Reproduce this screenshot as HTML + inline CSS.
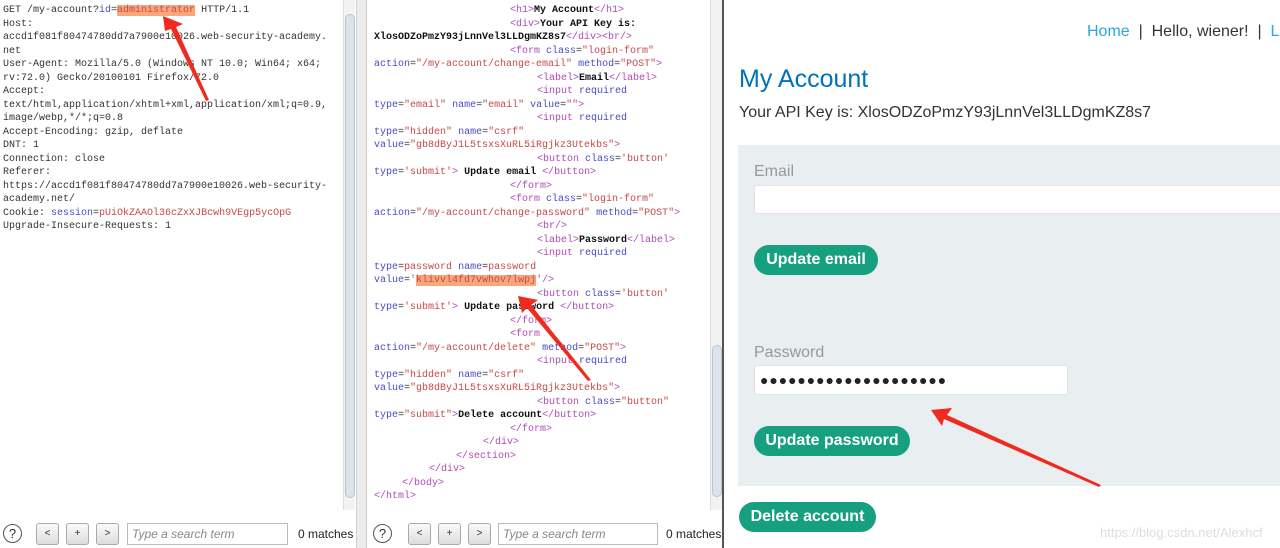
<!DOCTYPE html>
<html><head><meta charset="utf-8">
<style>
*{margin:0;padding:0;box-sizing:border-box}
body{width:1280px;height:548px;overflow:hidden;background:#fff;position:relative;font-family:"Liberation Sans",sans-serif}
.pane{position:absolute;top:0;height:520px;background:#fff;overflow:hidden}
.code{font-family:"Liberation Mono",monospace;font-size:10px;line-height:13.5px;color:#333;padding-top:4px}
.code div{height:13.5px;white-space:pre}
.t{color:#b04ab8}.a{color:#4a4ac8}.v{color:#c84848}.b{color:#111;font-weight:bold}
.hl{background:#f9a77a}
.sb{position:absolute;top:0;width:12px;height:510px;background:#f2f2f2;border-left:1px solid #ddd}
.sb .th{position:absolute;left:1px;width:10px;background:#dde3ea;border:1px solid #b8c4d0;border-radius:5px}
.bar{position:absolute;top:520px;height:28px;background:#fff;font-size:12px}
.q{position:absolute;top:4px;width:19px;height:19px;border:1px solid #555;border-radius:50%;text-align:center;font-size:13px;line-height:17px;color:#333}
.bt{position:absolute;top:3px;width:23px;height:22px;border:1px solid #aaa;border-radius:3px;background:linear-gradient(#fafafa,#ddd);text-align:center;font-size:10px;line-height:20px;color:#333}
.in{position:absolute;top:3px;height:22px;border:1px solid #bbb;background:#fff;font-style:italic;color:#888;font-size:12px;line-height:20px;padding-left:4px}
.m{position:absolute;top:7px;font-size:12px;color:#222}
.btn{position:absolute;background:#16a07f;color:#fff;font-weight:bold;font-size:16px;border-radius:16px;text-align:center;line-height:30px}
</style></head><body>

<div class="pane" style="left:0;width:343px;padding-left:3px">
<div class="code">
<div>GET /my-account?<span class="a">id</span>=<span class="v hl">administrator</span> HTTP/1.1</div>
<div>Host:</div>
<div>accd1f081f80474780dd7a7900e10026.web-security-academy.</div>
<div>net</div>
<div>User-Agent: Mozilla/5.0 (Windows NT 10.0; Win64; x64;</div>
<div>rv:72.0) Gecko/20100101 Firefox/72.0</div>
<div>Accept:</div>
<div>text/html,application/xhtml+xml,application/xml;q=0.9,</div>
<div>image/webp,*/*;q=0.8</div>
<div>Accept-Encoding: gzip, deflate</div>
<div>DNT: 1</div>
<div>Connection: close</div>
<div>Referer:</div>
<div>https://accd1f081f80474780dd7a7900e10026.web-security-</div>
<div>academy.net/</div>
<div>Cookie: <span class="a">session</span>=<span class="v">pUiOkZAAOl36cZxXJBcwh9VEgp5ycOpG</span></div>
<div>Upgrade-Insecure-Requests: 1</div>
</div></div>
<div class="sb" style="left:343px"><div class="th" style="top:14px;height:484px"></div></div>
<div style="position:absolute;left:356px;top:0;width:11px;height:548px;background:#ececec;border-left:1px solid #d0d0d0;border-right:1px solid #d0d0d0"></div>

<div class="pane" style="left:367px;width:343px;padding-left:7px">
<div class="code">
<div style="padding-left:136px"><span class="t">&lt;h1&gt;</span><span class="b">My Account</span><span class="t">&lt;/h1&gt;</span></div>
<div style="padding-left:136px"><span class="t">&lt;div&gt;</span><span class="b">Your API Key is:</span></div>
<div><span class="b">XlosODZoPmzY93jLnnVel3LLDgmKZ8s7</span><span class="t">&lt;/div&gt;&lt;br/&gt;</span></div>
<div style="padding-left:136px"><span class="t">&lt;form </span><span class="a">class</span>=<span class="v">"login-form"</span></div>
<div><span class="a">action</span>=<span class="v">"/my-account/change-email"</span> <span class="a">method</span>=<span class="v">"POST"</span><span class="t">&gt;</span></div>
<div style="padding-left:163px"><span class="t">&lt;label&gt;</span><span class="b">Email</span><span class="t">&lt;/label&gt;</span></div>
<div style="padding-left:163px"><span class="t">&lt;input </span><span class="a">required</span></div>
<div><span class="a">type</span>=<span class="v">"email"</span> <span class="a">name</span>=<span class="v">"email"</span> <span class="a">value</span>=<span class="v">""</span><span class="t">&gt;</span></div>
<div style="padding-left:163px"><span class="t">&lt;input </span><span class="a">required</span></div>
<div><span class="a">type</span>=<span class="v">"hidden"</span> <span class="a">name</span>=<span class="v">"csrf"</span></div>
<div><span class="a">value</span>=<span class="v">"gb8dByJ1L5tsxsXuRL5iRgjkz3Utekbs"</span><span class="t">&gt;</span></div>
<div style="padding-left:163px"><span class="t">&lt;button </span><span class="a">class</span>=<span class="v">'button'</span></div>
<div><span class="a">type</span>=<span class="v">'submit'</span><span class="t">&gt;</span> <span class="b">Update email</span> <span class="t">&lt;/button&gt;</span></div>
<div style="padding-left:136px"><span class="t">&lt;/form&gt;</span></div>
<div style="padding-left:136px"><span class="t">&lt;form </span><span class="a">class</span>=<span class="v">"login-form"</span></div>
<div><span class="a">action</span>=<span class="v">"/my-account/change-password"</span> <span class="a">method</span>=<span class="v">"POST"</span><span class="t">&gt;</span></div>
<div style="padding-left:163px"><span class="t">&lt;br/&gt;</span></div>
<div style="padding-left:163px"><span class="t">&lt;label&gt;</span><span class="b">Password</span><span class="t">&lt;/label&gt;</span></div>
<div style="padding-left:163px"><span class="t">&lt;input </span><span class="a">required</span></div>
<div><span class="a">type</span>=<span class="v">password</span> <span class="a">name</span>=<span class="v">password</span></div>
<div><span class="a">value</span>=<span class="v">'<span class="hl">klivvl4fd7vwhov7lwpj</span>'</span><span class="t">/&gt;</span></div>
<div style="padding-left:163px"><span class="t">&lt;button </span><span class="a">class</span>=<span class="v">'button'</span></div>
<div><span class="a">type</span>=<span class="v">'submit'</span><span class="t">&gt;</span> <span class="b">Update password</span> <span class="t">&lt;/button&gt;</span></div>
<div style="padding-left:136px"><span class="t">&lt;/form&gt;</span></div>
<div style="padding-left:136px"><span class="t">&lt;form</span></div>
<div><span class="a">action</span>=<span class="v">"/my-account/delete"</span> <span class="a">method</span>=<span class="v">"POST"</span><span class="t">&gt;</span></div>
<div style="padding-left:163px"><span class="t">&lt;input </span><span class="a">required</span></div>
<div><span class="a">type</span>=<span class="v">"hidden"</span> <span class="a">name</span>=<span class="v">"csrf"</span></div>
<div><span class="a">value</span>=<span class="v">"gb8dByJ1L5tsxsXuRL5iRgjkz3Utekbs"</span><span class="t">&gt;</span></div>
<div style="padding-left:163px"><span class="t">&lt;button </span><span class="a">class</span>=<span class="v">"button"</span></div>
<div><span class="a">type</span>=<span class="v">"submit"</span><span class="t">&gt;</span><span class="b">Delete account</span><span class="t">&lt;/button&gt;</span></div>
<div style="padding-left:136px"><span class="t">&lt;/form&gt;</span></div>
<div style="padding-left:109px"><span class="t">&lt;/div&gt;</span></div>
<div style="padding-left:82px"><span class="t">&lt;/section&gt;</span></div>
<div style="padding-left:55px"><span class="t">&lt;/div&gt;</span></div>
<div style="padding-left:28px"><span class="t">&lt;/body&gt;</span></div>
<div><span class="t">&lt;/html&gt;</span></div>
</div></div>
<div class="sb" style="left:710px"><div class="th" style="top:345px;height:152px"></div></div>
<div style="position:absolute;left:722px;top:0;width:2px;height:548px;background:#555"></div>

<div class="bar" style="left:0;width:356px">
<div class="q" style="left:3px">?</div>
<div class="bt" style="left:36px">&lt;</div><div class="bt" style="left:66px">+</div><div class="bt" style="left:96px">&gt;</div>
<div class="in" style="left:127px;width:161px">Type a search term</div>
<div class="m" style="left:298px">0 matches</div>
</div>
<div class="bar" style="left:367px;width:355px">
<div class="q" style="left:6px">?</div>
<div class="bt" style="left:41px">&lt;</div><div class="bt" style="left:71px">+</div><div class="bt" style="left:101px">&gt;</div>
<div class="in" style="left:131px;width:160px">Type a search term</div>
<div class="m" style="left:299px">0 matches</div>
</div>

<div style="position:absolute;left:724px;top:0;width:556px;height:548px;background:#fff;overflow:hidden">
<div style="position:absolute;left:363px;top:23px;font-size:16px;color:#333;white-space:nowrap"><span style="color:#29a8e0">Home</span> &nbsp;|&nbsp; Hello, wiener! &nbsp;|&nbsp; <span style="color:#29a8e0">Log out</span></div>
<div style="position:absolute;left:15px;top:65px;font-size:25px;color:#0071bc">My Account</div>
<div style="position:absolute;left:15px;top:104px;font-size:16px;color:#333">Your API Key is: XlosODZoPmzY93jLnnVel3LLDgmKZ8s7</div>
<div style="position:absolute;left:14px;top:145px;width:560px;height:341px;background:#e9eef1"></div>
<div style="position:absolute;left:30px;top:163px;font-size:16px;color:#999">Email</div>
<div style="position:absolute;left:30px;top:185px;width:540px;height:29px;background:#fff;border:1px solid #e0e4e6"></div>
<div class="btn" style="left:30px;top:245px;width:124px">Update email</div>
<div style="position:absolute;left:30px;top:344px;font-size:16px;color:#999">Password</div>
<div style="position:absolute;left:30px;top:365px;width:314px;height:30px;background:#fff;border:1px solid #e0e4e6;font-size:14px;line-height:28px;padding-left:5px;color:#222;letter-spacing:0.9px">●●●●●●●●●●●●●●●●●●●●</div>
<div class="btn" style="left:30px;top:426px;width:156px">Update password</div>
<div class="btn" style="left:15px;top:502px;width:137px">Delete account</div>
<div style="position:absolute;left:376px;top:525px;font-size:13px;color:#ddd">https://blog.csdn.net/Alexhcf</div>
</div>

<svg style="position:absolute;left:0;top:0" width="1280" height="548">
<g fill="#f02a1e">
<polygon points="163,16 183,24 176,27 209,100 206,101 171,29 165,31"/>
<polygon points="518,296 538,300 531,305 591,380 588,381 527,308 522,313"/>
<polygon points="931,410 952,408 947,415 1101,485 1099,487 944,419 942,426"/>
</g>
</svg>
</body></html>
